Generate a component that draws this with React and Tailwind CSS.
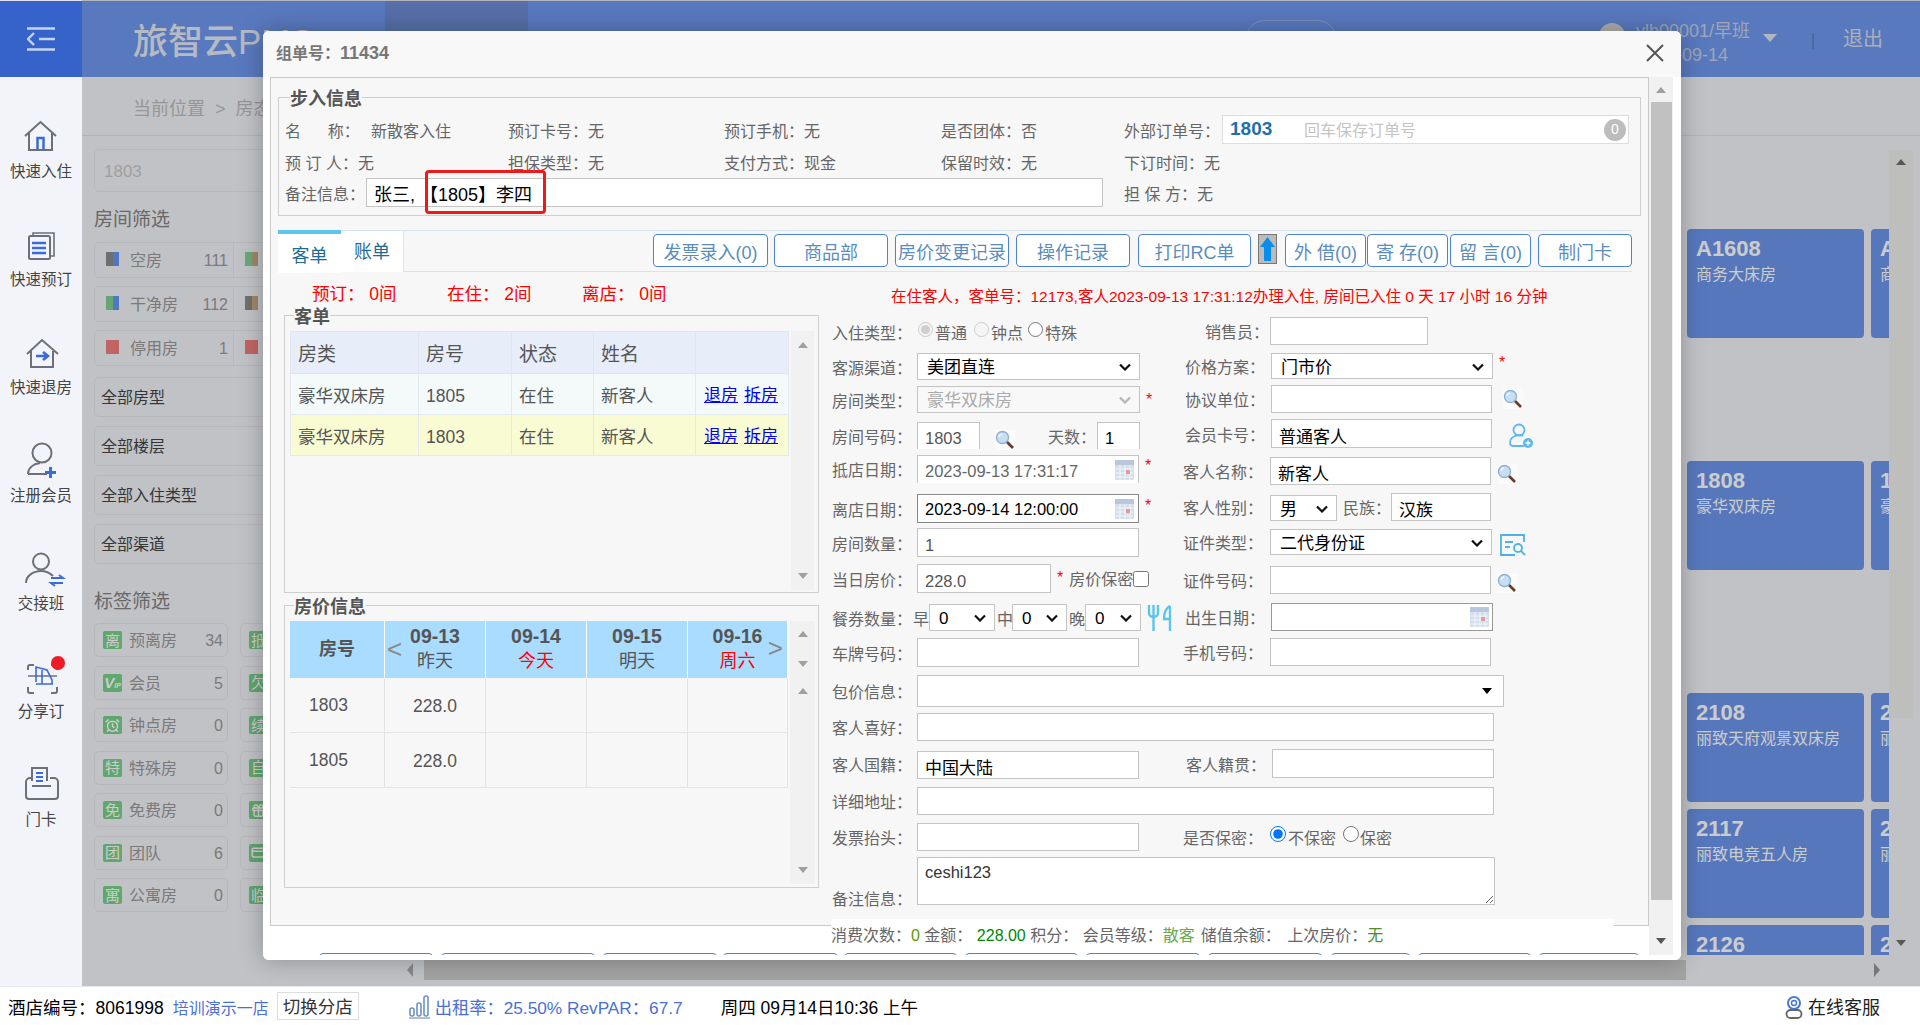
import React from "react";
import { AlarmClock, CreditCard, Gift } from "lucide-react";

const input = "bg-white border border-[#c4c4c4] px-[7px] pt-[3px] text-[16.5px] text-[#333] outline-none";
const label = "shrink-0 pt-[4px] text-[16px] text-[#666] whitespace-nowrap";

const SideIcon = ({ children }) => (
  <svg width="40" height="40" viewBox="0 0 40 40" fill="none" stroke="#6b7079" strokeWidth="2" className="overflow-visible">
    {children}
  </svg>
);

const blue = "#3a6bdc";

const sideItems = [
  {
    label: "快速入住",
    icon: (
      <SideIcon>
        <path d="M4 20 19.5 6 35 20M8 17v17h23V17" />
        <path d="M16.5 34V22h6v12" stroke={blue} strokeWidth="2.5" />
      </SideIcon>
    ),
  },
  {
    label: "快速预订",
    icon: (
      <SideIcon>
        <rect x="8" y="12" width="21" height="23" rx="1.5" />
        <path d="M12 11V9h21v23h-3" strokeWidth="1.6" />
        <path d="M11 19h14M11 24h14M11 29h14" stroke={blue} strokeWidth="2.4" />
      </SideIcon>
    ),
  },
  {
    label: "快速退房",
    icon: (
      <SideIcon>
        <path d="M6 22 21 8l16 14M10 19v16h22V19" />
        <path d="M15 24h11M22 20l5 4-5 4" stroke={blue} strokeWidth="2.6" />
      </SideIcon>
    ),
  },
  {
    label: "注册会员",
    icon: (
      <SideIcon>
        <circle cx="21" cy="13" r="9.5" />
        <path d="M7 34c0-6 5-10 12-11M7 34h19" />
        <path d="M24 32.5h11M29.5 27v11" stroke={blue} strokeWidth="3" />
      </SideIcon>
    ),
  },
  {
    label: "交接班",
    icon: (
      <SideIcon>
        <circle cx="20" cy="13.5" r="8" />
        <path d="M5 35c0-7 7-12 15-12 5 0 9 2 12 5" />
        <path d="M30 30h12l-4-3M42 35H30l4 3" stroke={blue} strokeWidth="2" />
      </SideIcon>
    ),
  },
  {
    label: "分享订",
    icon: (
      <SideIcon>
        <path d="M7 14v-3a2 2 0 0 1 2-2h4M30 9h4a2 2 0 0 1 2 2v3M7 31v4a2 2 0 0 0 2 2h4M30 37h4a2 2 0 0 0 2-2v-4" />
        <path d="M7 20h29" strokeWidth="1.5" />
        <path d="M15 26V11l11 3 5 10v4M15 28h17M21 14v14" stroke={blue} strokeWidth="1.6" />
        <circle cx="37" cy="7" r="7" fill="#ee1c25" stroke="none" />
      </SideIcon>
    ),
  },
  {
    label: "门卡",
    icon: (
      <SideIcon>
        <path d="M11 17V4h15v13" />
        <path d="M11 14H9a4 4 0 0 0-4 4v14a3 3 0 0 0 3 3h26a3 3 0 0 0 3-3V18a4 4 0 0 0-4-4h-4M11 22h19" />
        <path d="M15 9h7M15 13h7M15 17h7" stroke={blue} strokeWidth="2" />
      </SideIcon>
    ),
  },
];

const Sidebar = () => (
  <div className="flex flex-col items-center w-[82px] shrink-0 pt-[39px] bg-[#f3f4f9]">
    {sideItems.map((item) => (
      <div key={item.label} className="flex flex-col items-center h-[108px] shrink-0">
        {item.icon}
        <span className="mt-[6px] text-[15.5px] leading-[20px] text-[#444]">{item.label}</span>
      </div>
    ))}
  </div>
);

const Header = () => (
  <div className="flex h-[77px] shrink-0 border-t border-[#dfe3ec] bg-[#7098ef]">
    <div className="flex items-center justify-center w-[82px] bg-[#3563c9]">
      <svg width="28" height="24" viewBox="0 0 28 24" fill="none" stroke="#c6d3f1" strokeWidth="2.4">
        <path d="M0 1.5h28M12 12h16M0 22.5h28M7 6l-6 6 6 6" />
      </svg>
    </div>
    <div className="w-[303px] pl-[51px] pt-[2px] text-[35px] leading-[77px] text-[#e4e9f4] font-medium whitespace-nowrap">旅智云PMS</div>
    <div className="w-[143px] bg-[#6c8bd3]" />
    <div className="w-[92px] h-[40px] ml-[717px] mt-[19px] rounded-[20px] border border-[#9db6ee]" />
    <div className="flex-1" />
    <div className="w-[26px] h-[26px] mr-[11px] mt-[22px] rounded-full bg-[#d8d8d8]" />
    <div className="flex flex-col w-[127px] pt-[18px] leading-[24px] text-[#c5cfe4]">
      <span className="whitespace-nowrap text-[18px]">ylb00001/早班</span>
      <span className="text-[18px]">2023-09-14</span>
    </div>
    <div className="mt-[33px] w-0 h-0 border-x-[7px] border-x-transparent border-t-[8px] border-t-[#dfe4f0]" />
    <div className="ml-[35px] mt-[32px] h-[16px] w-[2px] bg-[#5f83cf]" />
    <div className="ml-[29px] mr-[37px] text-[20px] leading-[76px] text-[#d4dbea]">退出</div>
  </div>
);

const statusRows = [
  ["空房", "111", "bg-[#8b8b8b]", "bg-[#6795f2]", "bg-[#82d29a]", "bg-[#c9aa85]"],
  ["干净房", "112", "bg-[#7fd08f]", "bg-[#6795f2]", "bg-[#8b8b8b]", "bg-[#c9aa85]"],
  ["停用房", "1", "bg-[#f27e7e]", "bg-[#f27e7e]", "bg-[#f27e7e]", "bg-[#f27e7e]"],
];

const tagRows = [
  ["离", "预离房", "34", "抵"],
  ["vip", "会员", "5", "欠"],
  ["clock", "钟点房", "0", "续"],
  ["特", "特殊房", "0", "自"],
  ["免", "免费房", "0", "gift"],
  ["团", "团队", "6", "card"],
  ["寓", "公寓房", "0", "临"],
];

const Badge = ({ text }) => (
  <div className="flex items-center justify-center w-[19px] h-[18px] rounded-[2px] bg-[#78d18a] text-[15px] leading-none text-white shrink-0">
    {text === "vip" ? (
      <span className="italic font-bold text-[15px]">
        V<span className="text-[7px]">IP</span>
      </span>
    ) : text === "clock" ? (
      <AlarmClock size={15} strokeWidth={2.4} />
    ) : text === "gift" ? (
      <Gift size={15} strokeWidth={2.4} />
    ) : text === "card" ? (
      <CreditCard size={15} strokeWidth={2.4} />
    ) : (
      text
    )}
  </div>
);

const FilterPanel = () => (
  <div className="w-[470px] shrink-0 pl-[12px] overflow-hidden">
    <div className="flex items-center mt-[13px] h-[43px] w-[450px] pl-[9px] pt-[2px] rounded-[5px] border border-[#e6e7eb] text-[17px] text-[#c8c8c8]">
      1803
    </div>
    <div className="mt-[16px] h-[24px] text-[19px] leading-[24px] text-[#828282]">房间筛选</div>
    <div className="flex flex-col gap-[8px] mt-[10px]">
      {statusRows.map(([name, count, a, b, c, d]) => (
        <div key={name} className="flex h-[36px] w-[350px] rounded-[5px] border border-[#e6e7eb] text-[16px] text-[#999]">
          <div className="flex items-center w-[139px] border-r border-[#e6e7eb] pl-[11px] pr-[5px]">
            <span className={`w-[6.5px] h-[14px] -mt-[2px] ${a}`} />
            <span className={`w-[6.5px] h-[14px] -mt-[2px] ${b}`} />
            <span className="ml-[11px] flex-1 pt-[2px]">{name}</span>
            <span className="pt-[2px]">{count}</span>
          </div>
          <div className="flex items-center pl-[11px]">
            <span className={`w-[6.5px] h-[14px] -mt-[2px] ${c}`} />
            <span className={`w-[6.5px] h-[14px] -mt-[2px] ${d}`} />
          </div>
        </div>
      ))}
    </div>
    <div className="flex flex-col gap-[9px] mt-[11px]">
      {["全部房型", "全部楼层", "全部入住类型", "全部渠道"].map((item) => (
        <div key={item} className="flex items-center h-[40px] w-[450px] pl-[6px] pt-[2px] rounded-[5px] border border-[#e6e7eb] text-[16px] text-[#444]">
          {item}
        </div>
      ))}
    </div>
    <div className="mt-[26px] h-[24px] text-[19px] leading-[24px] text-[#828282]">标签筛选</div>
    <div className="grid grid-cols-[134px_134px] gap-x-[12px] gap-y-[8.5px] mt-[9px]">
      {tagRows.map(([badge, name, count, other]) => (
        <React.Fragment key={name}>
          <div className="flex items-center h-[34px] pl-[8px] pr-[4px] rounded-[5px] border border-[#e6e7eb] text-[16px] text-[#999]">
            <Badge text={badge} />
            <span className="ml-[7px] flex-1 pt-[2px]">{name}</span>
            <span className="pt-[2px]">{count}</span>
          </div>
          <div className="flex items-center h-[34px] pl-[8px] rounded-[5px] border border-[#e6e7eb]">
            <Badge text={other} />
          </div>
        </React.Fragment>
      ))}
    </div>
  </div>
);

const roomRows = [
  ["A1608", "商务大床房", "A1610", "商务大床房", "mt-[93px]"],
  ["1808", "豪华双床房", "1810", "豪华双床房", "mt-[123px]"],
  ["2108", "丽致天府观景双床房", "2110", "丽致天府观景双床房", "mt-[123px]"],
  ["2117", "丽致电竞五人房", "2119", "丽致电竞五人房", "mt-[7px]"],
  ["2126", "丽致电竞五人房", "2128", "丽致电竞五人房", "mt-[7px]"],
];

const RoomCard = ({ no, type }) => (
  <div className="w-[177px] h-[109px] shrink-0 px-[9px] pt-[7px] rounded-[4px] bg-[#6c95ec] text-white">
    <div className="text-[22px] leading-[26px] font-bold">{no}</div>
    <div className="mt-[1px] text-[16px] leading-[24px] whitespace-nowrap">{type}</div>
  </div>
);

const Triangle = ({ up, color = "fill-[#a0a0a0]" }) => (
  <svg width="12" height="8" viewBox="0 0 12 8" className={color}>
    <path d={up ? "M6 1l5 6H1z" : "M6 7L1 1h10z"} />
  </svg>
);

const RoomPanel = () => (
  <div className="flex flex-1 min-w-0">
    <div className="flex-1 h-[819px] pl-[1135px] overflow-hidden">
      {roomRows.map(([no, type, no2, type2, gap]) => (
        <div key={no} className={`flex gap-[7px] ${gap}`}>
          <RoomCard no={no} type={type} />
          <RoomCard no={no2} type={type2} />
        </div>
      ))}
    </div>
    <div className="relative w-[24px] h-[805px] mt-[14px] mr-[7px] shrink-0">
      <div className="flex justify-center pt-[8px] h-[568px] bg-[#eeeeec]">
        <Triangle up color="fill-[#6f6f6f]" />
      </div>
      <div className="absolute bottom-[8px] left-[6px]">
        <Triangle color="fill-[#6f6f6f]" />
      </div>
    </div>
  </div>
);

const Search = ({ className = "" }) => (
  <svg width="20" height="20" viewBox="0 0 20 20" className={`shrink-0 ${className}`}>
    <rect width="20" height="20" fill="#fbfbfb" />
    <path d="M11 11l7 7" stroke="#6b3a2a" strokeWidth="2.6" />
    <circle cx="7.5" cy="7.5" r="6" fill="#c8def2" stroke="#8fb2d4" strokeWidth="1.4" />
    <path d="M4 7a3.5 3.5 0 0 1 3-3" stroke="#fff" strokeWidth="1.2" fill="none" />
  </svg>
);

const Calendar = ({ className = "" }) => (
  <svg width="19" height="20" viewBox="0 0 19 20" className={className}>
    <rect width="19" height="20" rx="1.5" fill="#d5dfec" />
    <rect y="0" width="19" height="5" fill="#b9c7dc" />
    <path d="M1 9h17M1 13h17M1 17h17M5 5v15M10 5v15M15 5v15" stroke="#f2f5f9" strokeWidth="1" />
    <rect x="11" y="10" width="4" height="4" fill="#e69a94" />
  </svg>
);

const Star = ({ className = "" }) => <span className={`text-[16px] leading-none text-[#f00] ${className}`}>*</span>;

const Select = ({ value, className = "", disabled }) => (
  <div className={`relative shrink-0 ${className}`}>
    <select
      disabled={disabled}
      defaultValue={value}
      className={`appearance-none block w-full h-full border border-[#c4c4c4] pl-[9px] pt-[1px] text-[17px] outline-none ${disabled ? "bg-[#f8f8f8] text-[#aaa]" : "bg-white text-black"}`}
    >
      <option>{value}</option>
    </select>
    <svg width="12" height="8" viewBox="0 0 12 8" fill="none" strokeWidth="2.2" stroke={disabled ? "#b5b5b5" : "#111"} className="absolute right-[9px] top-[10px]">
      <path d="M1 1.500l5 5 5-5" />
    </svg>
  </div>
);

const topButtons = [
  ["发票录入(0)", "w-[115px]"],
  ["商品部", "w-[114px] ml-[6px]"],
  ["房价变更记录", "w-[114px] ml-[7px]"],
  ["操作记录", "w-[114px] ml-[7px]"],
  ["打印RC单", "w-[113px] ml-[8px]"],
];

const topButtons2 = [
  ["外 借(0)", "w-[81px] ml-[8px]"],
  ["寄 存(0)", "w-[81px] ml-[1px]"],
  ["留 言(0)", "w-[81px] ml-[2px]"],
  ["制门卡", "w-[94px] ml-[7px]"],
];

const btn = "flex items-center justify-center h-[33px] pt-[5px] bg-white border border-[#4a82d8] rounded-[4px] text-[18px] text-[#5a8dbd] whitespace-nowrap";

const Tabs = () => (
  <div className="flex mt-[14px] ml-[7px] w-[1354px] h-[42px] border-y border-[#d9e4ec]">
    <div className="w-[63px] h-[43px] -mt-px pt-[7px] border-t-[4px] border-[#5cc6ee] bg-white text-center text-[18px] leading-[30px] text-[#1e6c92]">客单</div>
    <div className="w-[63px] h-[41px] bg-white border-r border-[#e5e5e5] text-center text-[18px] leading-[42px] text-[#1e6c92]">账单</div>
    <div className="flex items-start flex-1 pt-[3px] justify-end">
      {topButtons.map(([text, size]) => (
        <div key={text} className={`${btn} ${size}`}>{text}</div>
      ))}
      <div className="flex items-center justify-center w-[19px] h-[30px] ml-[7px] bg-[#bcbcb8] border border-[#777]">
        <svg width="15" height="24" viewBox="0 0 15 24">
          <path d="M7.5 0 15 10h-4v14H4V10H0z" fill="#0b8df0" />
        </svg>
      </div>
      {topButtons2.map(([text, size]) => (
        <div key={text} className={`${btn} ${size}`}>{text}</div>
      ))}
    </div>
  </div>
);

const Info = ({ children }) => <div className="pt-[5px] whitespace-pre">{children}</div>;

const InfoFieldset = () => (
  <fieldset className="mt-[9px] ml-[7px] w-[1363px] h-[129px] border border-[#cfcfcf] pl-[6px]">
    <legend className="ml-[5px] h-[20px] text-[18px] leading-[24px] font-bold text-[#555]">步入信息</legend>
    <div className="grid grid-cols-[223px_216px_217px_183px_1fr] grid-rows-[29px_28px_29px] items-center mt-[8px] gap-y-[3px] text-[16px] text-[#666]">
      <div className="flex pt-[5px]">
        <span className="w-[86px] whitespace-pre">名      称：</span>
        <span>新散客入住</span>
      </div>
      <Info>预订卡号：无</Info>
      <Info>预订手机：无</Info>
      <Info>是否团体：否</Info>
      <div className="flex items-center">
        <span className="w-[98px] pt-[5px]">外部订单号：</span>
        <div className="flex items-center w-[407px] h-[29px] pl-[7px] pr-[2px] bg-white border border-[#ddd]">
          <span className="w-[74px] text-[19px] font-bold text-[#1f6fa9]">1803</span>
          <span className="flex-1 pt-[2px] text-[16px] text-[#c4c4c4]">回车保存订单号</span>
          <span className="flex items-center justify-center w-[22px] h-[22px] rounded-full bg-[#bdbdbd] text-[14px] text-white">0</span>
        </div>
      </div>
      <Info>预 订 人：无</Info>
      <Info>担保类型：无</Info>
      <Info>支付方式：现金</Info>
      <Info>保留时效：无</Info>
      <Info>下订时间：无</Info>
      <div className="col-span-4 flex items-center">
        <span className="w-[81px] pt-[5px]">备注信息：</span>
        <div className="relative">
          <input readOnly value="张三, 【1805】李四" className="block w-[737px] h-[29px] bg-white border border-[#c4c4c4] pl-[7px] text-[18px] text-black outline-none" />
          <div className="absolute left-[59px] -top-[8px] w-[121px] h-[44px] rounded-[4px] border-[3px] border-[#f01818]" />
        </div>
      </div>
      <Info>担 保 方：无</Info>
    </div>
  </fieldset>
);

const guests = [
  ["豪华双床房", "1805", "在住", "新客人", "bg-[#f3faf9]"],
  ["豪华双床房", "1803", "在住", "新客人", "bg-[#f9fbd3]"],
];

const ScrollTrack = ({ className }) => (
  <div className={`flex flex-col items-center justify-between py-[10px] w-[23px] bg-[#f1f1f1] ${className}`}>
    <Triangle up />
    <Triangle />
  </div>
);

const tableCell = "pl-[7px] pt-[4px] border border-[#e3e9ee]";

const GuestFieldset = () => (
  <fieldset className="mt-[2px] w-[535px] h-[288px] border border-[#cfcfcf] pl-[5px]">
    <legend className="ml-[4px] h-[20px] text-[18px] leading-[24px] font-bold text-[#555]">客单</legend>
    <div className="flex mt-[6px]">
      <table className="table-fixed w-[498px] h-[125px] self-start border-collapse text-[17.5px] text-[#555]">
        <colgroup>
          <col className="w-[128px]" />
          <col className="w-[93px]" />
          <col className="w-[82px]" />
          <col className="w-[102px]" />
          <col className="w-[93px]" />
        </colgroup>
        <thead>
          <tr className="h-[42px] bg-[#e7edf9] text-[19px]">
            {["房类", "房号", "状态", "姓名", ""].map((head) => (
              <th key={head} className="pl-[7px] pt-[6px] border border-[#dfe6f1] text-left font-normal">{head}</th>
            ))}
          </tr>
        </thead>
        <tbody>
          {guests.map(([type, no, state, name, bg]) => (
            <tr key={no} className={`h-[41px] ${bg}`}>
              <td className={tableCell}>{type}</td>
              <td className={tableCell}>{no}</td>
              <td className={tableCell}>{state}</td>
              <td className={tableCell}>{name}</td>
              <td className={`${tableCell} !pl-[8px] text-[17px] text-[#00f] whitespace-nowrap`}>
                <span className="underline">退房</span>
                <span className="ml-[6px] underline">拆房</span>
              </td>
            </tr>
          ))}
        </tbody>
      </table>
      <ScrollTrack className="ml-[2px] h-[259px]" />
    </div>
  </fieldset>
);

const priceHead = [
  ["09-13", "昨天", "text-[#555]"],
  ["09-14", "今天", "text-[#f00]"],
  ["09-15", "明天", "text-[#555]"],
  ["09-16", "周六", "text-[#f00]"],
];

const cell = "flex items-center justify-center border-r border-b border-[#e4e4e4] text-[17.5px] text-[#555]";

const PriceFieldset = () => (
  <fieldset className="mt-[2px] w-[535px] h-[293px] border border-[#cfcfcf] pl-[5px]">
    <legend className="ml-[4px] h-[20px] text-[18px] leading-[24px] font-bold text-[#555]">房价信息</legend>
    <div className="flex mt-[6px]">
      <div className="grid grid-cols-[95px_101px_101px_101px_100px] grid-rows-[57px_55px_55px] w-[498px] self-start">
        <div className="flex items-center justify-center border-r border-white bg-[#a9dcff] text-[18px] font-bold text-[#555]">房号</div>
        {priceHead.map(([date, day, color], i) => (
          <div key={date} className="relative flex flex-col items-center justify-center pb-[2px] border-r border-white bg-[#a9dcff]">
            <span className="text-[19.5px] leading-[24px] font-bold text-[#555]">{date}</span>
            <span className={`text-[18px] leading-[26px] ${color}`}>{day}</span>
            {i === 0 && <span className="absolute left-[2px] top-[13px] text-[26px] leading-[30px] text-[#888]">&lt;</span>}
            {i === 3 && <span className="absolute right-[4px] top-[12px] text-[26px] leading-[30px] text-[#888]">&gt;</span>}
          </div>
        ))}
        {["1803", "1805"].map((room) => (
          <React.Fragment key={room}>
            <div className={`${cell} pr-[17px] pt-[1px]`}>{room}</div>
            <div className={`${cell} pt-[3px]`}>228.0</div>
            <div className={cell} />
            <div className={cell} />
            <div className={cell} />
          </React.Fragment>
        ))}
      </div>
      <div className="flex flex-col ml-[2px] w-[25px]">
        <ScrollTrack className="h-[56px] !py-[9px] !w-[25px]" />
        <ScrollTrack className="h-[207px] !w-[25px]" />
      </div>
    </div>
  </fieldset>
);

const Row = ({ name, className = "", labelWidth = "w-[85px]", children }) => (
  <div className={`flex items-center ${className}`}>
    <span className={`${label} ${labelWidth}`}>{name}</span>
    {children}
  </div>
);

const FormLeft = () => (
  <div className="flex flex-col w-[351px] shrink-0">
    <Row name="入住类型：" className="mt-[11px] h-[28px]">
      <input type="radio" name="kind" disabled defaultChecked className="w-[15px] h-[15px] ml-[1px] mb-[6px]" />
      <span className={`${label} ml-[2px]`}>普通</span>
      <input type="radio" name="kind" disabled className="w-[15px] h-[15px] ml-[7px] mb-[6px]" />
      <span className={`${label} ml-[2px]`}>钟点</span>
      <input type="radio" name="kind" className="w-[15px] h-[15px] ml-[5px] mb-[6px]" />
      <span className={`${label} ml-[2px]`}>特殊</span>
    </Row>
    <Row name="客源渠道：" className="mt-[7px] h-[27px]">
      <Select value="美团直连" className="w-[223px] h-full" />
    </Row>
    <Row name="房间类型：" className="mt-[6px] h-[27px]">
      <Select value="豪华双床房" disabled className="w-[223px] h-full" />
      <Star className="ml-[6px]" />
    </Row>
    <Row name="房间号码：" className="mt-[9px] h-[27px]">
      <input readOnly value="1803" className={`${input} !pt-[5px] !border-b-0 w-[63px] h-full text-[#555]`} />
      <Search className="ml-[15px] mt-[8px]" />
      <span className={`${label} ml-[33px] w-[49px]`}>天数：</span>
      <input readOnly value="1" className={`${input} !pt-[5px] !border-b-0 w-[43px] h-full text-black`} />
    </Row>
    <Row name="抵店日期：" className="mt-[6px] h-[28px]">
      <div className="flex items-center w-[222px] h-full bg-white border border-b-0 border-[#c4c4c4] pl-[7px] pr-[4px] text-[16.5px] text-[#666]">
        <span className="flex-1 pt-[4px]">2023-09-13 17:31:17</span>
        <Calendar />
      </div>
      <Star className="ml-[6px] -mt-[6px]" />
    </Row>
    <Row name="离店日期：" className="mt-[11px] h-[29px]">
      <div className="flex items-center w-[222px] h-full bg-white border border-[#888] pl-[7px] pr-[4px] text-[16.5px] text-black">
        <span className="flex-1 pt-[2px]">2023-09-14 12:00:00</span>
        <Calendar />
      </div>
      <Star className="ml-[6px] -mt-[6px]" />
    </Row>
    <Row name="房间数量：" className="mt-[5px] h-[29px]">
      <input readOnly value="1" className={`${input} !pt-[5px] w-[222px] h-full text-[#555]`} />
    </Row>
    <Row name="当日房价：" className="mt-[7px] h-[29px]">
      <input readOnly value="228.0" className={`${input} !pt-[5px] w-[134px] h-full text-[#555]`} />
      <Star className="ml-[6px] -mt-[2px]" />
      <span className="ml-[6px] pt-[3px] text-[16px] text-[#666] whitespace-nowrap">房价保密</span>
      <input type="checkbox" className="w-[16px] h-[16px]" />
    </Row>
    <Row name="餐券数量：" className="mt-[11px] h-[27px]" labelWidth="w-[81px]">
      <span className={label}>早</span>
      <Select value="0" className="w-[66px] h-full" />
      <span className={`${label} ml-[2px]`}>中</span>
      <Select value="0" className="w-[55px] h-full ml-[-1px]" />
      <span className={`${label} ml-[2px]`}>晚</span>
      <Select value="0" className="w-[56px] h-full" />
      <svg width="24" height="26" viewBox="0 0 24 26" fill="none" stroke="#5cc4ef" strokeWidth="2.4" className="ml-[6px]">
        <path d="M2 0v8c0 3 2 4 4.500 4S11 11 11 8V0M6.500 0v26M23 1c-4 2-6 7-6 13h6M23 1v25" />
      </svg>
    </Row>
    <Row name="车牌号码：" className="mt-[7px] h-[29px]">
      <input readOnly className={`${input} w-[222px] h-full`} />
    </Row>
  </div>
);

const FormRight = () => (
  <div className="flex flex-col">
    <Row name="销售员：" className="mt-[10px] h-[28px]" labelWidth="w-[87px] pl-[22px]">
      <input readOnly className={`${input} w-[158px] h-full`} />
    </Row>
    <Row name="价格方案：" className="mt-[8px] h-[26px]" labelWidth="w-[88px] pl-[2px]">
      <Select value="门市价" className="w-[222px] h-full" />
      <Star className="ml-[6px] -mt-[6px]" />
    </Row>
    <Row name="协议单位：" className="mt-[6px] h-[28px]" labelWidth="w-[88px] pl-[2px]">
      <input readOnly className={`${input} w-[221px] h-full`} />
      <Search className="ml-[11px]" />
    </Row>
    <Row name="会员卡号：" className="mt-[6px] h-[29px]" labelWidth="w-[88px] pl-[2px]">
      <input readOnly value="普通客人" className={`${input} w-[221px] h-full !text-[17px] text-black`} />
      <svg width="26" height="26" viewBox="0 0 26 26" fill="none" stroke="#5cb8f0" strokeWidth="1.8" className="ml-[16px] mt-[5px]">
        <circle cx="11" cy="7" r="5.500" />
        <path d="M15 13c-2-1-6-1-8 0-3 1-5 4-5 7 0 2 2 3 4 3h10" />
        <circle cx="20" cy="20" r="5" fill="#5cb8f0" stroke="none" />
        <path d="M17.500 20h5M20 17.500v5" stroke="#fff" strokeWidth="1.400" />
      </svg>
    </Row>
    <Row name="客人名称：" className="mt-[9px] h-[28px]" labelWidth="w-[87px]">
      <input readOnly value="新客人" className={`${input} w-[221px] h-full !text-[17px] text-black`} />
      <Search className="ml-[6px] mt-[5px]" />
    </Row>
    <Row name="客人性别：" className="mt-[8px] h-[28px]" labelWidth="w-[87px]">
      <Select value="男" className="w-[67px] h-[26px] mt-[1px]" />
      <span className={`${label} ml-[6px] w-[48px]`}>民族：</span>
      <input readOnly value="汉族" className={`${input} w-[100px] h-full !text-[17px] text-black`} />
    </Row>
    <Row name="证件类型：" className="mt-[8px] h-[26px]" labelWidth="w-[87px]">
      <Select value="二代身份证" className="w-[222px] h-full" />
      <svg width="26" height="22" viewBox="0 0 26 22" fill="none" stroke="#4db2ea" strokeWidth="1.800" className="ml-[8px] mt-[6px]">
        <path d="M24 8V1H1v20h14" />
        <path d="M5 8h8M5 13h5" />
        <circle cx="18" cy="14" r="4" />
        <path d="M21 17l4 4" />
      </svg>
    </Row>
    <Row name="证件号码：" className="mt-[11px] h-[28px]" labelWidth="w-[87px]">
      <input readOnly className={`${input} w-[221px] h-full`} />
      <Search className="ml-[6px] mt-[6px]" />
    </Row>
    <Row name="出生日期：" className="mt-[9px] h-[28px]" labelWidth="w-[88px] pl-[2px]">
      <div className="flex items-center justify-end w-[222px] h-full bg-white border border-[#999] pr-[3px]">
        <Calendar />
      </div>
    </Row>
    <Row name="手机号码：" className="mt-[7px] h-[28px]" labelWidth="w-[87px]">
      <input readOnly className={`${input} w-[221px] h-full`} />
    </Row>
  </div>
);

const FormBottom = () => (
  <div className="flex flex-col">
    <Row name="包价信息：" className="mt-[8px] h-[32px]">
      <div className="flex items-center justify-end w-[587px] h-full bg-white border border-[#c4c4c4] pr-[10px]">
        <Triangle color="fill-black" />
      </div>
    </Row>
    <Row name="客人喜好：" className="mt-[6px] h-[28px]">
      <input readOnly className={`${input} w-[577px] h-full`} />
    </Row>
    <Row name="客人国籍：" className="mt-[7px] h-[31px]">
      <input readOnly value="中国大陆" className={`${input} w-[222px] h-[28px] mt-[3px] !text-[17px] text-black`} />
      <span className={`${label} ml-[47px] w-[86px]`}>客人籍贯：</span>
      <input readOnly className={`${input} w-[222px] h-[29px]`} />
    </Row>
    <Row name="详细地址：" className="mt-[8px] h-[28px]">
      <input readOnly className={`${input} w-[577px] h-full`} />
    </Row>
    <Row name="发票抬头：" className="mt-[8px] h-[28px]">
      <input readOnly className={`${input} w-[222px] h-full`} />
      <span className={`${label} ml-[44px] w-[87px]`}>是否保密：</span>
      <input type="radio" name="secret" defaultChecked className="w-[16px] h-[16px] mb-[6px]" />
      <span className={`${label} ml-[2px]`}>不保密</span>
      <input type="radio" name="secret" className="w-[16px] h-[16px] ml-[7px] mb-[6px]" />
      <span className={`${label} ml-[1px]`}>保密</span>
    </Row>
    <div className="flex mt-[6px] h-[48px]">
      <span className={`${label} w-[85px] self-end leading-[20px] -mb-[5px]`}>备注信息：</span>
      <textarea readOnly value="ceshi123" className="w-[578px] h-full bg-white border border-[#c4c4c4] px-[7px] py-[2px] text-[16.5px] text-[#333] outline-none" />
    </div>
    <div className="relative flex items-center mt-[14px] -ml-[1px] w-[783px] h-[32px] pt-[2px] bg-white text-[16px] text-[#666] whitespace-pre">
      <span>消费次数：</span>
      <span className="text-[#5a9a00]">0</span>
      <span> 金额： </span>
      <span className="text-[#080]">228.00</span>
      <span> 积分： </span>
      <span>会员等级：</span>
      <span className="text-[#6aa84f]">散客</span>
      <span className="ml-[6px]">储值余额： </span>
      <span className="ml-[2px]">上次房价：</span>
      <span className="text-[#4e8f2f]">无</span>
    </div>
  </div>
);

const footButtons = [
  "w-[114px] ml-[49px]",
  "w-[154px] ml-[8px]",
  "w-[114px] ml-[8px]",
  "w-[115px] ml-[6px]",
  "w-[113px] ml-[6px]",
  "w-[113px] ml-[8px]",
  "w-[114px] ml-[8px]",
  "w-[114px] ml-[8px]",
  "w-[79px] ml-[9px]",
  "w-[113px] ml-[8px]",
  "w-[100px] ml-[8px]",
];

const Modal = () => (
  <div className="absolute left-[263px] top-[31px] w-[1418px] h-[929px] flex flex-col rounded-[6px] bg-white shadow-[0_0_24px_rgba(0,0,0,0.28)] overflow-hidden">
    <div className="flex items-center justify-between h-[44px] shrink-0 pl-[13px] pr-[17px] bg-[#f8f8f8] text-[16px] font-bold text-[#777]">
      <span>组单号：<span className="text-[18px]">11434</span></span>
      <svg width="18" height="18" viewBox="0 0 18 18" stroke="#555" strokeWidth="2">
        <path d="M1 1l16 16M17 1 1 17" />
      </svg>
    </div>
    <div className="h-[2px] shrink-0 bg-[#f8f8f8]" />
    <div className="flex ml-[7px] w-[1403px] h-[878px] shrink-0 overflow-hidden">
      <div className="w-[1379px] shrink-0">
        <div className="relative h-[849px] border border-[#c9c9c9] bg-[#f7f7f7]">
          <InfoFieldset />
          <Tabs />
          <div className="flex">
            <div className="ml-[13px] w-[535px] shrink-0">
              <div className="flex h-[21px] mt-[10px] pl-[28px] text-[17.5px] leading-[24px] text-[#f00] whitespace-pre">
                <span className="w-[135px]">预订： 0间</span>
                <span className="w-[135px]">在住： 2间</span>
                <span>离店： 0间</span>
              </div>
              <GuestFieldset />
              <PriceFieldset />
            </div>
            <div className="ml-[13px]">
              <div className="mt-[15px] h-[20px] pl-[59px] text-[15.5px] leading-[20px] text-[#f00] whitespace-nowrap">
                在住客人，客单号：12173,客人2023-09-13 17:31:12办理入住, 房间已入住 0 天 17 小时 16 分钟
              </div>
              <div className="flex">
                <FormLeft />
                <FormRight />
              </div>
              <FormBottom />
            </div>
          </div>
        </div>
        <div className="flex mt-[27px]">
          {footButtons.map((size) => (
            <div key={size} className={`h-[30px] rounded-[4px] border border-[#4a82d8] ${size}`} />
          ))}
        </div>
      </div>
      <div className="relative w-[24px] bg-[#f1f1f1]">
        <div className="flex justify-center pt-[9px]"><Triangle up /></div>
        <div className="absolute left-[2px] top-[25px] w-[21px] h-[798px] bg-[#c1c1c1]" />
        <div className="absolute left-[6px] bottom-[10px]"><Triangle color="fill-[#555]" /></div>
      </div>
    </div>
    <div className="flex-1 bg-white" />
  </div>
);

const Footer = () => (
  <div className="relative z-10 flex items-center h-[39px] shrink-0 pl-[8px] pt-[5px] border-t border-[#e6e7ec] bg-white text-[17.5px] text-black whitespace-nowrap">
    <span>酒店编号：8061998</span>
    <span className="ml-[9px] text-[16px] text-[#4a6fd8]">培训演示一店</span>
    <span className="flex items-center justify-center w-[82px] h-[28px] ml-[8px] -mt-[5px] pt-[3px] border border-[#ddd] text-[#333]">切换分店</span>
    <svg width="21" height="24" viewBox="0 0 21 24" fill="none" stroke="#6c93c9" strokeWidth="1.600" className="ml-[50px] -mt-[4px]">
      <rect x="1" y="13" width="4" height="8" rx="2" />
      <rect x="8" y="8" width="4" height="13" rx="2" />
      <rect x="15" y="1" width="4" height="20" rx="2" />
      <path d="M0 23h21" stroke="#a7adb6" />
    </svg>
    <span className="ml-[5px] text-[17.25px] text-[#4a6fd8]">出租率：25.50% RevPAR：67.7</span>
    <span className="ml-[38px]">周四 09月14日10:36 上午</span>
    <div className="flex-1" />
    <svg width="18" height="24" viewBox="0 0 18 24" fill="none" className="mr-[5px] -mt-[4px]">
      <circle cx="9" cy="8" r="6" stroke="#4a78d8" strokeWidth="2" />
      <circle cx="9" cy="8" r="2.500" stroke="#4a78d8" strokeWidth="1.500" />
      <rect x="1.500" y="15" width="15" height="8" rx="4" stroke="#666" strokeWidth="1.800" />
    </svg>
    <span className="mr-[40px] text-[18px] text-[#222]">在线客服</span>
  </div>
);

export default function App() {
  return (
    <div className="relative flex flex-col w-[1920px] h-[1025px] overflow-hidden bg-[#f2f3f8] [font-family:'Liberation_Sans','Noto_Sans_CJK_SC',sans-serif]">
      <Header />
      <div className="flex flex-1 min-h-0">
        <Sidebar />
        <div className="flex flex-col flex-1 min-w-0">
          <div className="flex items-center h-[59px] shrink-0 pl-[51px] pt-[6px] border-b border-[#dfe0e5] text-[18px] text-[#bcbcbc] whitespace-pre">
            当前位置  &gt;  房态
          </div>
          <div className="flex flex-1 min-h-0">
            <FilterPanel />
            <RoomPanel />
          </div>
        </div>
      </div>
      <Footer />
      <div className="absolute left-[82px] top-0 right-0 bottom-[39px] bg-black/20" />
      <div className="absolute left-[404px] top-[960px] right-[7px] h-[20px] flex items-center">
        <div className="w-[20px] flex justify-start">
          <span className="w-0 h-0 ml-[3px] border-y-[7px] border-y-transparent border-r-[6px] border-r-[#888]" />
        </div>
        <div className="w-[1262px] h-full bg-[#a3a3a3]" />
        <div className="ml-[188px]">
          <span className="block w-0 h-0 border-y-[7px] border-y-transparent border-l-[6px] border-l-[#777]" />
        </div>
      </div>
      <Modal />
    </div>
  );
}
